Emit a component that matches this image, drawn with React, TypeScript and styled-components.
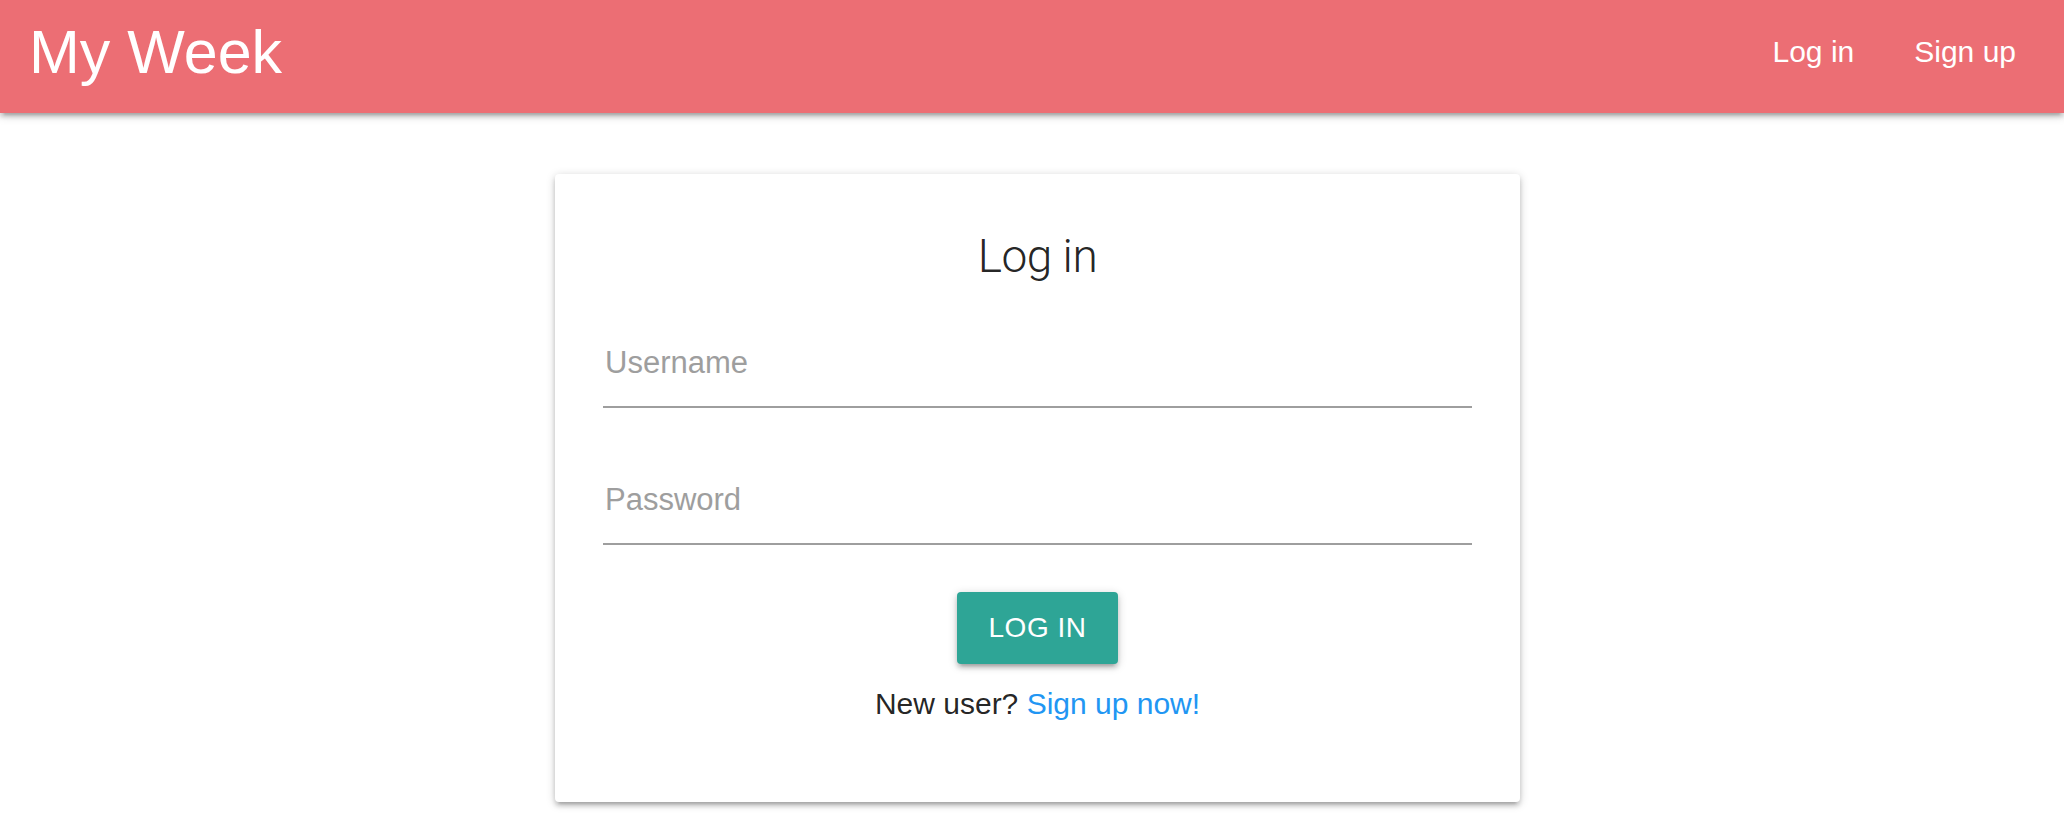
import React from "react";
import styled, { createGlobalStyle } from "styled-components";

const GlobalStyle = createGlobalStyle`
  html, body {
    margin: 0;
    padding: 0;
    background: #ffffff;
    font-family: "Liberation Sans", Arial, sans-serif;
    color: rgba(0, 0, 0, 0.87);
  }
  * { box-sizing: border-box; }
`;

const shadow = `0 4px 4px 0 rgba(0,0,0,0.14), 0 6px 2px -4px rgba(0,0,0,0.12), 0 2px 10px 0 rgba(0,0,0,0.2)`;

const NavBar = styled.nav`
  display: flex;
  justify-content: space-between;
  align-items: flex-start;
  height: 113px;
  padding: 0 18px 0 29px;
  background: #ec6e74;
  box-shadow: ${shadow};
`;

const Brand = styled.a`
  font-size: 61px;
  line-height: 104px;
  color: #ffffff;
  text-decoration: none;
`;

const NavList = styled.ul`
  display: flex;
  margin: 0;
  padding: 0;
  list-style: none;
`;

const NavLink = styled.a`
  display: block;
  padding: 0 30px;
  font-size: 30px;
  line-height: 103px;
  color: #ffffff;
  text-decoration: none;
`;

const Main = styled.main`
  display: flex;
  justify-content: center;
  padding: 61px 0 40px 11px;
`;

const Card = styled.section`
  width: 965px;
  padding: 48px;
  background: #ffffff;
  border-radius: 4px;
  box-shadow: ${shadow};
`;

const Title = styled.h2`
  margin: 6px 0 35px;
  font-family: Roboto, "Liberation Sans", sans-serif;
  font-weight: 300;
  font-size: 46px;
  line-height: 56px;
  letter-spacing: -0.5px;
  text-align: center;
  color: rgba(0, 0, 0, 0.87);
`;

const Fields = styled.div`
  display: flex;
  flex-direction: column;
  gap: 48px;
`;

const Input = styled.input`
  display: block;
  width: 100%;
  height: 89px;
  margin: 0;
  padding: 0 0 0 2px;
  border: none;
  border-bottom: 2px solid #9e9e9e;
  background: transparent;
  outline: none;
  font-family: "Liberation Sans", Arial, sans-serif;
  font-size: 31px;
  color: rgba(0, 0, 0, 0.87);
  &::placeholder {
    color: #9e9e9e;
    opacity: 1;
  }
`;

const ButtonRow = styled.div`
  display: flex;
  justify-content: center;
  margin-top: 47px;
`;

const Button = styled.button`
  height: 72px;
  padding: 0 32px;
  border: none;
  border-radius: 4px;
  background: #2ea596;
  color: #ffffff;
  font-family: "Liberation Sans", Arial, sans-serif;
  font-size: 28px;
  letter-spacing: 0.5px;
  text-transform: uppercase;
  box-shadow: ${shadow};
  cursor: pointer;
`;

const Footer = styled.p`
  margin: 18px 0 28px;
  font-size: 30px;
  line-height: 44px;
  text-align: center;
  color: rgba(0, 0, 0, 0.87);
`;

const Link = styled.a`
  color: #2196f3;
  text-decoration: none;
`;

export default function App() {
  return (
    <>
      <GlobalStyle />
      <NavBar>
        <Brand href="#">My Week</Brand>
        <NavList>
          <li>
            <NavLink href="#">Log in</NavLink>
          </li>
          <li>
            <NavLink href="#">Sign up</NavLink>
          </li>
        </NavList>
      </NavBar>
      <Main>
        <Card>
          <Title>Log in</Title>
          <Fields>
            <Input type="text" placeholder="Username" />
            <Input type="password" placeholder="Password" />
          </Fields>
          <ButtonRow>
            <Button type="button">Log in</Button>
          </ButtonRow>
          <Footer>
            New user? <Link href="#">Sign up now!</Link>
          </Footer>
        </Card>
      </Main>
    </>
  );
}
